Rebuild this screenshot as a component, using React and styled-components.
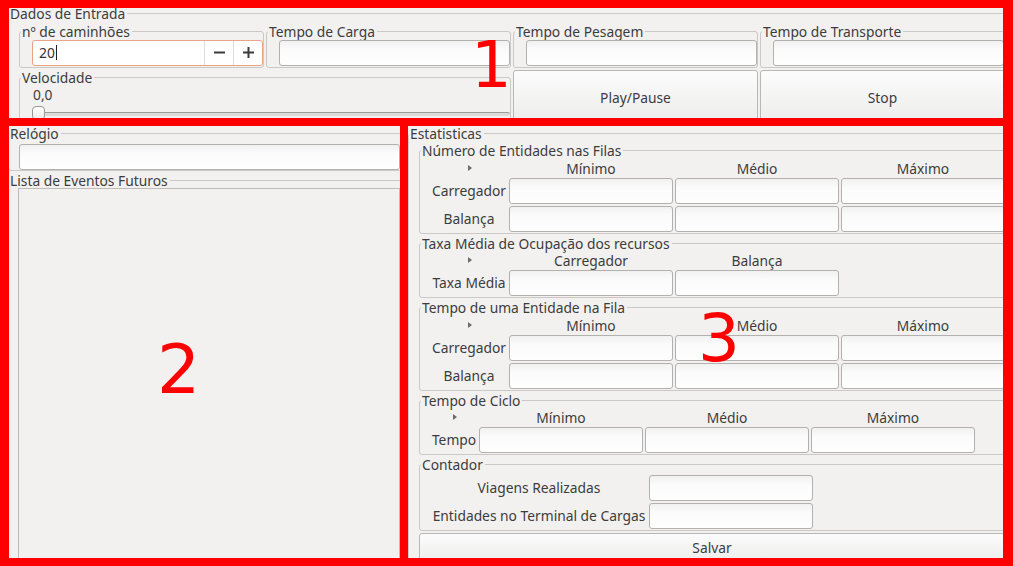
import styled, { createGlobalStyle } from "styled-components";

const GlobalStyle = createGlobalStyle`
  html, body { margin: 0; padding: 0; background: #f2f1f0; }
  body {
    font-family: "Noto Sans", "DejaVu Sans", sans-serif;
    font-size: 13.8px;
    color: #3c3c3c;
  }
  * { box-sizing: border-box; }
`;

const Window = styled.div`
  position: relative;
  width: 1013px;
  height: 566px;
  overflow: hidden;
  padding: 6px 5px 0 8px;
  display: flex;
  flex-direction: column;
`;

const Group = styled.fieldset`
  margin: 0;
  padding: 0;
  min-width: 0;
  border: 1px solid #cbc9c6;
  border-radius: 3px;
  display: flex;
  flex-direction: column;
  flex: ${(p) => (p.$grow ? 1 : "none")};
  grid-column: ${(p) => (p.$span ? `span ${p.$span}` : "auto")};
`;

const Legend = styled.legend`
  padding: 0 2px 0 1px;
  margin-left: ${(p) => (p.$outer ? 0 : 1)}px;
  font-size: 13.8px;
  line-height: 15px;
  white-space: nowrap;
  color: #3c3c3c;
`;

const Body = styled.div`
  padding: ${(p) => p.$pad || "0"};
  display: flex;
  flex-direction: column;
  gap: ${(p) => p.$gap || 0}px;
  flex: 1;
  min-height: 0;
`;

const TopGrid = styled.div`
  display: grid;
  grid-template-columns: repeat(4, 1fr);
  gap: 2px;
`;

const Field = styled.div`
  height: 26px;
  border: 1px solid #b3b1ae;
  border-radius: 3px;
  background: linear-gradient(#f1f1f1, #fbfbfb 35%, #fefefe);
`;

const Spin = styled.div`
  display: flex;
  height: 26px;
  border: 1px solid #eaa487;
  border-radius: 3px;
  background: #fff;
`;

const SpinText = styled.div`
  flex: 1;
  display: flex;
  align-items: center;
  padding-left: 6px;
  color: #333;
`;

const Caret = styled.span`
  width: 1px;
  height: 15px;
  margin-left: 1px;
  background: #222;
`;

const SpinButton = styled.div`
  width: 29px;
  border-left: 1px solid #dedcd9;
  display: flex;
  align-items: center;
  justify-content: center;
`;

const Value = styled.div`
  line-height: 16px;
  padding-left: 1px;
`;

const Slider = styled.div`
  position: relative;
  height: 20px;
`;

const Groove = styled.div`
  position: absolute;
  left: 0;
  right: 0;
  top: 9px;
  height: 4px;
  border-radius: 2px;
  border-top: 1px solid #9d9b98;
  background: #dcdad7;
`;

const Handle = styled.div`
  position: absolute;
  left: 0;
  top: 3px;
  width: 13px;
  height: 14px;
  border-radius: 4px;
  border: 1px solid #9a9896;
  background: linear-gradient(#ffffff, #ebebea);
`;

const PushButton = styled.button`
  font: inherit;
  color: #3c3c3c;
  margin: 0;
  padding: 0;
  border: 1px solid #bab8b5;
  border-radius: 3px;
  background: linear-gradient(#fcfcfc, #ececeb);
  height: ${(p) => (p.$h ? `${p.$h}px` : "auto")};
`;

const Lower = styled.div`
  flex: 1;
  min-height: 0;
  display: grid;
  grid-template-columns: 396px 1fr;
  column-gap: 4px;
`;

const Column = styled.div`
  display: flex;
  flex-direction: column;
  gap: 2px;
  min-height: 0;
`;

const ListBox = styled.div`
  flex: 1;
  border: 1px solid #bebcb9;
  border-bottom: none;
  background: #f2f1f0;
`;

const Table = styled.div`
  display: grid;
  grid-template-columns: ${(p) => p.$label}px repeat(${(p) => p.$cols}, 164px);
  grid-template-rows: ${(p) => (p.$head ? "17px" : "26px")};
  grid-auto-rows: 26px;
  column-gap: 2px;
  row-gap: 2px;
`;

const Head = styled.div`
  text-align: center;
  line-height: 17px;
  padding-top: 1px;
  white-space: nowrap;
`;

const ArrowCell = styled.div`
  display: flex;
  align-items: center;
  justify-content: center;
  padding-top: 1px;
`;

const Arrow = styled.span`
  width: 0;
  height: 0;
  border-top: 3.5px solid transparent;
  border-bottom: 3.5px solid transparent;
  border-left: 4px solid #6b6b6b;
  margin-left: 2px;
`;

const RowLabel = styled.div`
  text-align: center;
  line-height: 26px;
  white-space: nowrap;
`;

const Mark = styled.div`
  position: absolute;
  left: ${(p) => p.$x}px;
  top: ${(p) => p.$y}px;
  width: ${(p) => p.$w}px;
  height: ${(p) => p.$h}px;
  border: 8px solid #ff0000;
  border-left-width: ${(p) => p.$l || 8}px;
  border-right-width: ${(p) => p.$r || 8}px;
  pointer-events: none;
`;

const Tag = styled.div`
  position: absolute;
  left: ${(p) => p.$x}px;
  top: ${(p) => p.$y}px;
  font-family: "DejaVu Sans", sans-serif;
  font-size: ${(p) => p.$size || 64}px;
  line-height: 1;
  color: #ff0000;
`;

const MinusIcon = () => (
  <svg width="11" height="11" viewBox="0 0 11 11">
    <path d="M0 5.5h11" stroke="#3a3a3a" strokeWidth="2" />
  </svg>
);

const PlusIcon = () => (
  <svg width="11" height="11" viewBox="0 0 11 11">
    <path d="M0 5.5h11M5.5 0v11" stroke="#3a3a3a" strokeWidth="2" />
  </svg>
);

function SubGroup({ title, children, span }) {
  return (
    <Group $span={span}>
      <Legend>{title}</Legend>
      <Body $pad="1px 0 1px 12px">{children}</Body>
    </Group>
  );
}

function StatTable({ title, label, cols, rows }) {
  return (
    <Group>
      <Legend>{title}</Legend>
      <Body $pad="0.5px 0 1px 11px">
        <Table $label={label} $cols={cols.length} $head>
          <ArrowCell>
            <Arrow />
          </ArrowCell>
          {cols.map((c) => (
            <Head key={c}>{c}</Head>
          ))}
          {rows.map((r) => (
            <>
              <RowLabel key={r}>{r}</RowLabel>
              {cols.map((c) => (
                <Field key={r + c} />
              ))}
            </>
          ))}
        </Table>
      </Body>
    </Group>
  );
}

const minMedMax = ["Mínimo", "Médio", "Máximo"];

export default function App() {
  return (
    <>
      <GlobalStyle />
      <Window>
        <Group>
          <Legend $outer>Dados de Entrada</Legend>
          <Body $pad="2.5px 2px 0 10px">
            <TopGrid>
              <SubGroup title="nº de caminhões">
                <Spin>
                  <SpinText>
                    20
                    <Caret />
                  </SpinText>
                  <SpinButton>
                    <MinusIcon />
                  </SpinButton>
                  <SpinButton>
                    <PlusIcon />
                  </SpinButton>
                </Spin>
              </SubGroup>
              <SubGroup title="Tempo de Carga">
                <Field />
              </SubGroup>
              <SubGroup title="Tempo de Pesagem">
                <Field />
              </SubGroup>
              <SubGroup title="Tempo de Transporte">
                <Field />
              </SubGroup>
              <Group $span={2}>
                <Legend>Velocidade</Legend>
                <Body $pad="2px 0 1px 12px">
                  <Value>0,0</Value>
                  <Slider>
                    <Groove />
                    <Handle />
                  </Slider>
                </Body>
              </Group>
              <PushButton>Play/Pause</PushButton>
              <PushButton>Stop</PushButton>
            </TopGrid>
          </Body>
        </Group>

        <Lower>
          <Column>
            <Group>
              <Legend $outer>Relógio</Legend>
              <Body $pad="3.5px 3px 0 10px">
                <Field />
              </Body>
            </Group>
            <Group $grow>
              <Legend $outer>Lista de Eventos Futuros</Legend>
              <Body $pad="0 3px 0 9px">
                <ListBox />
              </Body>
            </Group>
          </Column>

          <Group>
            <Legend $outer>Estatisticas</Legend>
            <Body $pad="2.5px 2px 0 10px" $gap={2}>
              <StatTable
                title="Número de Entidades nas Filas"
                label={76}
                cols={minMedMax}
                rows={["Carregador", "Balança"]}
              />
              <StatTable
                title="Taxa Média de Ocupação dos recursos"
                label={76}
                cols={["Carregador", "Balança"]}
                rows={["Taxa Média"]}
              />
              <StatTable
                title="Tempo de uma Entidade na Fila"
                label={76}
                cols={minMedMax}
                rows={["Carregador", "Balança"]}
              />
              <StatTable
                title="Tempo de Ciclo"
                label={46}
                cols={minMedMax}
                rows={["Tempo"]}
              />
              <Group>
                <Legend>Contador</Legend>
                <Body $pad="2.5px 0 1px 11px">
                  <Table $label={216} $cols={1}>
                    <RowLabel>Viagens Realizadas</RowLabel>
                    <Field />
                    <RowLabel>Entidades no Terminal de Cargas</RowLabel>
                    <Field />
                  </Table>
                </Body>
              </Group>
              <PushButton $h={30}>Salvar</PushButton>
            </Body>
          </Group>
        </Lower>

        <Mark $x={0} $y={0} $w={1013} $h={126} $l={9} $r={10} />
        <Mark $x={0} $y={118} $w={408} $h={448} $l={9} />
        <Mark $x={400} $y={118} $w={613} $h={448} $r={10} />
        <Tag $x={471} $y={33}>1</Tag>
        <Tag $x={157} $y={336} $size={68}>2</Tag>
        <Tag $x={698} $y={306} $size={66}>3</Tag>
      </Window>
    </>
  );
}
